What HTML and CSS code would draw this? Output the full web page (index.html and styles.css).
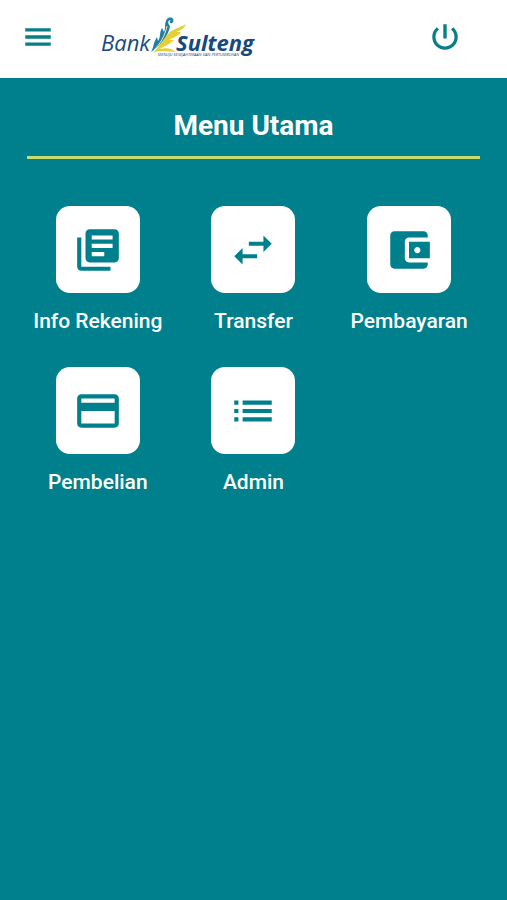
FILE: index.html
```html
<!DOCTYPE html>
<html lang="id">
<head>
    <meta charset="UTF-8">
    <meta name="viewport" content="width=device-width, initial-scale=1.0">
    <title>Bank Sulteng</title>
    <link rel="stylesheet" href="styles.css">
</head>
<body>

    <header class="topbar">
        <button class="icon-button" type="button" aria-label="Menu">
            <svg viewBox="0 0 24 24"><path d="M3 18.200h18v-2.400H3v2.400zm0-5h18v-2.400H3v2.400zm0-7.400v2.400h18V5.800H3z"/></svg>
        </button>
        <a class="logo" href="#">
            <span class="logo-bank">Bank</span>
            <svg class="logo-mark" viewBox="0 0 36 42">
                <path fill="#e6cf35" d="M3 37C9 31 12 25 17 19C22 13 29 12 36 8C34 13 30 15 26 16L31 16C27 21 22 22 19 24L24 24C19 29 12 31 10 33C18 31 22 33 26 36C18 36 9 34 3 37z"/>
                <path fill="#1f7fa8" d="M1 36C4 31 3 27 7 21L8 25C11 21 9 17 12 12L14 16C16 12 14 7 17 3C20 0 25 2 23 6C21 9 18 6 21 4C17 4 18 8 20 10C19 17 15 22 11 27C7 32 4 34 1 36z"/>
                <path fill="none" stroke="#f4f2b0" d="M4 34C10 28 15 20 17 10"/>
            </svg>
            <span class="logo-name">Sulteng</span>
            <span class="logo-tagline">MENUJU KESEJAHTERAAN DAN PERTUMBUHAN</span>
        </a>
        <button class="icon-button" type="button" aria-label="Keluar">
            <svg viewBox="0 0 24 24"><path d="M13.200 3h-2.400v10h2.400V3zm4.630 2.170l-1.600 1.600C17.800 8 18.700 9.810 18.700 12c0 3.700-3 6.700-6.700 6.700s-6.700-3-6.700-6.700c0-2.190.900-4 2.470-5.230L6.170 5.170C4.230 6.820 3 9.260 3 12c0 4.970 4.030 9 9 9s9-4.030 9-9c0-2.740-1.230-5.180-3.170-6.830z"/></svg>
        </button>
    </header>

    <main class="content">
        <h1 class="title">Menu Utama</h1>

        <nav class="menu">
            <a class="menu-item" href="#">
                <span class="tile"><svg viewBox="0 0 24 24"><path d="M4 6H2v14c0 1.100.900 2 2 2h14v-2H4V6zm16-4H8c-1.100 0-2 .900-2 2v12c0 1.100.900 2 2 2h12c1.100 0 2-.900 2-2V4c0-1.100-.900-2-2-2zm-1 9H9V9h10v2zm-4 4H9v-2h6v2zm4-8H9V5h10v2z"/></svg></span>
                <span class="label">Info Rekening</span>
            </a>
            <a class="menu-item" href="#">
                <span class="tile"><svg viewBox="0 0 24 24"><path d="M6.990 11L3 15l3.990 4v-3H14v-2H6.990v-3zM21 9l-3.990-4v3H10v2h7.010v3L21 9z"/></svg></span>
                <span class="label">Transfer</span>
            </a>
            <a class="menu-item" href="#">
                <span class="tile"><svg viewBox="0 0 24 24"><path d="M21 18v1c0 1.100-.900 2-2 2H5c-1.110 0-2-.900-2-2V5c0-1.100.890-2 2-2h14c1.100 0 2 .900 2 2v1h-9c-1.110 0-2 .900-2 2v8c0 1.100.890 2 2 2h9zm-9-2h10V8H12v8zm4-2.500c-.830 0-1.500-.670-1.500-1.500s.670-1.500 1.500-1.500 1.500.670 1.500 1.500-.670 1.500-1.500 1.500z"/></svg></span>
                <span class="label">Pembayaran</span>
            </a>
            <a class="menu-item" href="#">
                <span class="tile"><svg viewBox="0 0 24 24"><path d="M20 4H4c-1.110 0-2 .890-2 2v12c0 1.110.890 2 2 2h16c1.110 0 2-.890 2-2V6c0-1.110-.890-2-2-2zm0 14H4v-6h16v6zm0-10H4V6h16v2z"/></svg></span>
                <span class="label">Pembelian</span>
            </a>
            <a class="menu-item" href="#">
                <span class="tile"><svg viewBox="0 0 24 24"><path d="M3 13h2v-2H3v2zm0 4h2v-2H3v2zm0-8h2V7H3v2zm4 4h14v-2H7v2zm0 4h14v-2H7v2zM7 7v2h14V7H7z"/></svg></span>
                <span class="label">Admin</span>
            </a>
        </nav>
    </main>

</body>
</html>
```
FILE: styles.css
```css
* {
    box-sizing: border-box;
}

body {
    margin: 0;
    min-height: 100vh;
    background-color: #00808c;
    color: white;
    font-family: Roboto, sans-serif;
}

a {
    color: inherit;
    text-decoration: none;
}

svg {
    display: block;
    fill: currentColor;
}

.topbar {
    display: flex;
    align-items: center;
    height: 78px;
    padding: 0 45px 4px 21px;
    background-color: white;
    color: #087f86;
}

.icon-button {
    width: 34px;
    height: 34px;
    padding: 0;
    border: none;
    background: none;
    color: inherit;
    cursor: pointer;
}

.logo {
    position: relative;
    display: flex;
    align-items: flex-start;
    margin-left: 46px;
    margin-right: auto;
    color: #17497f;
    font-family: "Open Sans", sans-serif;
    font-size: 22px;
    font-style: italic;
    line-height: 30px;
}

.logo-bank {
    padding-top: 11px;
    font-weight: 500;
}

.logo-mark {
    width: 36px;
    height: 42px;
    margin-right: -10px;
}

.logo-name {
    padding-top: 11px;
    font-weight: bold;
}

/* sits under the name, over the tail of the feather */
.logo-tagline {
    position: absolute;
    right: 15px;
    bottom: 1px;
    font-size: 4px;
    font-weight: 500;
    line-height: 5px;
    white-space: nowrap;
}

.content {
    padding: 28px 20px;
}

.title {
    margin: 0 7px 47px;
    padding-bottom: 10px;
    border-bottom: 3px solid #c8dc6c;
    font-size: 28px;
    font-weight: bold;
    line-height: 40px;
    text-align: center;
}

.menu {
    display: grid;
    grid-template-columns: repeat(3, 1fr);
    row-gap: 32px;
}

.menu-item {
    display: flex;
    flex-direction: column;
    align-items: center;
    gap: 14px;
}

.tile {
    display: flex;
    align-items: center;
    justify-content: center;
    width: 84px;
    height: 87px;
    border-radius: 14px;
    background-color: white;
    color: #00808c;
}

.tile svg {
    width: 50px;
    height: 50px;
}

.label {
    font-size: 21px;
    font-weight: 500;
    line-height: 28px;
}
```
